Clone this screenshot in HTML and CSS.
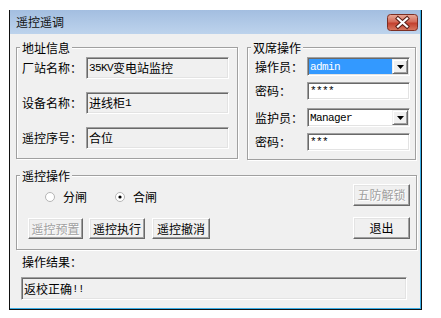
FILE: index.html
```html
<!DOCTYPE html>
<html>
<head>
<meta charset="utf-8">
<title>遥控遥调</title>
<link rel="stylesheet" href="styles.css">
</head>
<body>
<div class="window">
  <div class="frame">
    <div class="titlebar">
      <span class="title">遥控遥调</span>
      <svg class="close" width="31" height="17" viewBox="0 0 31 17">
        <defs>
          <linearGradient id="cg" x1="0" y1="0" x2="0" y2="1">
            <stop offset="0" stop-color="#e9ab9b"/>
            <stop offset="0.45" stop-color="#d46c5a"/>
            <stop offset="0.55" stop-color="#c3412f"/>
            <stop offset="1" stop-color="#d97a62"/>
          </linearGradient>
        </defs>
        <rect x="0.5" y="0.5" width="30" height="16" rx="3" fill="url(#cg)" stroke="#7c2f24"/>
        <path d="M11 4.5 L20 12.5 M20 4.5 L11 12.5" stroke="#5a2018" stroke-width="4.2" stroke-linecap="square"/>
        <path d="M11 4.5 L20 12.5 M20 4.5 L11 12.5" stroke="#ffffff" stroke-width="2.2" stroke-linecap="square"/>
      </svg>
    </div>
    <div class="client">
      <div class="top-row">
        <div class="group group-addr">
          <span class="legend">地址信息</span>
          <div class="row"><span class="label label-addr">厂站名称：</span><div class="field ro field-addr"><span class="lat">35KV</span>变电站监控</div></div>
          <div class="row row-gap"><span class="label label-addr">设备名称：</span><div class="field ro field-addr">进线柜<span class="lat">1</span></div></div>
          <div class="row row-gap"><span class="label label-addr">遥控序号：</span><div class="field ro field-addr">合位</div></div>
        </div>
        <div class="group group-dual">
          <span class="legend">双席操作</span>
          <div class="row"><span class="label label-dual">操作员：</span>
            <div class="combo">
              <div class="combo-text sel"><span class="lat">admin</span></div>
              <div class="drop"><svg width="7" height="4" viewBox="0 0 7 4"><polygon points="0,0 7,0 3.5,4" fill="#000"/></svg></div>
            </div>
          </div>
          <div class="row gap6"><span class="label label-dual">密码：</span><div class="field pw"><span class="lat">****</span></div></div>
          <div class="row gap8"><span class="label label-dual">监护员：</span>
            <div class="combo">
              <div class="combo-text"><span class="lat">Manager</span></div>
              <div class="drop"><svg width="7" height="4" viewBox="0 0 7 4"><polygon points="0,0 7,0 3.5,4" fill="#000"/></svg></div>
            </div>
          </div>
          <div class="row gap6"><span class="label label-dual">密码：</span><div class="field pw"><span class="lat">***</span></div></div>
        </div>
      </div>
      <div class="group group-ctrl">
        <span class="legend">遥控操作</span>
        <div class="ctrl-left">
          <div class="radios">
            <span class="radio"><svg width="10" height="10" viewBox="0 0 10 10"><circle cx="5" cy="5" r="4.5" fill="#fff" stroke="#b4b4b4"/></svg><span class="radio-text">分闸</span></span>
            <span class="radio radio-2"><svg width="10" height="10" viewBox="0 0 10 10"><circle cx="5" cy="5" r="4.5" fill="#fff" stroke="#b4b4b4"/><circle cx="5" cy="5" r="1.6" fill="#000"/></svg><span class="radio-text">合闸</span></span>
          </div>
          <div class="btns">
            <div class="btn disabled w55">遥控预置</div>
            <div class="btn w56 ml6">遥控执行</div>
            <div class="btn w58 ml7">遥控撤消</div>
          </div>
        </div>
        <div class="ctrl-right">
          <div class="btn disabled w57 h22">五防解锁</div>
          <div class="btn w57 h22">退出</div>
        </div>
      </div>
      <div class="result-label">操作结果：</div>
      <div class="field ro result">返校正确<span class="lat">!!</span></div>
    </div>
  </div>
</div>
</body>
</html>
```
FILE: styles.css
```css
* { box-sizing: border-box; margin: 0; padding: 0; }
html, body { background: #ffffff; }
body {
  font-family: "Noto Sans CJK SC", "Noto Sans", sans-serif;
  font-size: 12px;
  line-height: 14px;
  color: #000;
}
.lat {
  font-family: "Liberation Mono", "DejaVu Sans Mono", monospace;
  font-size: 11px;
  letter-spacing: -0.6px;
}
.window {
  margin: 10px 0 0 9px;
  width: 413px;
  height: 300px;
  border: 1px solid #111;
  border-top: 0;
}
.frame {
  height: 100%;
  display: flex;
  flex-direction: column;
  border-right: 1px solid #3aaee6;
  border-bottom: 1px solid #3aaee6;
}
.titlebar {
  height: 24px;
  flex: none;
  display: flex;
  justify-content: space-between;
  align-items: flex-start;
  background: linear-gradient(#a3bee0, #bdd3ec);
  padding: 0 2px 0 6px;
}
.title { margin-top: 5px; color: #111; }
.close { margin-top: 4px; display: block; }
.client {
  flex: 1;
  background: #f0f0f0;
  padding: 13px 0 0 6px;
}
.top-row { display: flex; gap: 9px; }
.group {
  position: relative;
  border: 1px solid #a0a0a0;
  box-shadow: inset 1px 1px #fff, 1px 1px #fff;
}
.legend {
  position: absolute;
  top: -7px;
  left: 3px;
  padding: 0 2px;
  background: #f0f0f0;
  line-height: 14px;
  white-space: nowrap;
}
.row { display: flex; align-items: center; }
.row-gap { margin-top: 13px; }
.gap6 { margin-top: 6px; }
.gap8 { margin-top: 8px; }
.label { white-space: nowrap; flex: none; }

.group-addr { width: 222px; height: 112px; padding: 9px 8px 0 5px; }
.label-addr { width: 64px; }
.field {
  background: #fff;
  border: 1px solid;
  border-color: #a0a0a0 #fff #fff #a0a0a0;
  box-shadow: inset 1px 1px #696969, inset -1px -1px #e3e3e3;
  display: flex;
  align-items: center;
  padding-left: 2px;
  white-space: nowrap;
  overflow: hidden;
}
.field.ro { background: #f0f0f0; }
.field-addr { width: 143px; height: 22px; }

.group-dual { width: 169px; height: 113px; padding: 9px 5px 0 7px; }
.label-dual { width: 52px; }
.pw { width: 103px; height: 18px; }
.combo {
  width: 103px;
  height: 19px;
  display: flex;
  background: #fff;
  border: 1px solid;
  border-color: #a0a0a0 #fff #fff #a0a0a0;
  box-shadow: inset 1px 1px #696969, inset -1px -1px #e3e3e3;
  padding: 1px;
}
.combo-text {
  flex: 1;
  display: flex;
  align-items: center;
  padding-left: 1px;
  white-space: nowrap;
}
.combo-text.sel { background: #3399ff; color: #fff; }
.drop {
  width: 16px;
  flex: none;
  background: #f0f0f0;
  border: 1px solid;
  border-color: #f0f0f0 #696969 #696969 #f0f0f0;
  box-shadow: inset 1px 1px #fff, inset -1px -1px #a0a0a0;
  display: flex;
  align-items: center;
  justify-content: center;
}
.drop svg { display: block; }

.group-ctrl {
  width: 401px;
  height: 75px;
  margin-top: 15px;
  display: flex;
  justify-content: space-between;
  padding: 8px 6px 0 11px;
}
.ctrl-left { display: flex; flex-direction: column; }
.radios {
  display: flex;
  align-items: center;
  height: 16px;
  margin-top: 5px;
  padding-left: 17px;
}
.radio { display: flex; align-items: center; }
.radio svg { display: block; margin-right: 8px; }
.radio-2 { margin-left: 28px; }
.btns { display: flex; margin-top: 13px; }
.btn {
  height: 21px;
  border: 1px solid;
  border-color: #fff #696969 #696969 #fff;
  box-shadow: inset -1px -1px #a0a0a0, inset 1px 1px #e3e3e3;
  background: #f0f0f0;
  display: flex;
  align-items: center;
  justify-content: center;
  white-space: nowrap;
}
.btn.disabled { color: #a0a0a0; text-shadow: 1px 1px #fff; }
.w55 { width: 55px; }
.w56 { width: 56px; }
.w57 { width: 57px; }
.w58 { width: 58px; }
.h22 { height: 22px; }
.ml6 { margin-left: 6px; }
.ml7 { margin-left: 7px; }
.ctrl-right { display: flex; flex-direction: column; gap: 11px; }

.result-label { margin: 5px 0 0 6px; }
.result { width: 386px; height: 23px; margin: 8px 0 0 5px; }
```
